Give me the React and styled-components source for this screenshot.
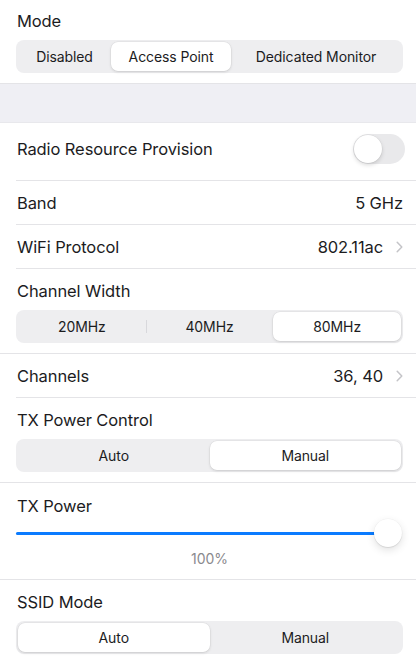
import React from 'react';
import styled, { createGlobalStyle } from 'styled-components';

const GlobalStyle = createGlobalStyle`
  html, body {
    margin: 0;
    padding: 0;
    background: #ffffff;
  }
  body {
    font-family: Inter, "Noto Sans", "Liberation Sans", sans-serif;
    font-weight: 400;
    color: #1c1c1e;
  }
`;

/* Layout blocks */

const Page = styled.div`
  width: 416px;
  background: #ffffff;
`;

const Block = styled.section`
  padding: ${(p) => (p.$first ? '10px' : '11px')} 13px 10px 16px;
  border-bottom: 1px solid #e4e4e7;
`;

const Label = styled.div`
  font-size: 16.5px;
  line-height: 22px;
  letter-spacing: -0.1px;
  margin: 0 0 8px 1px;
`;

const Gap = styled.div`
  height: 38px;
  background: #efeff4;
  border-bottom: 1px solid #e8e8ec;
`;

const Row = styled.div`
  display: flex;
  align-items: center;
  justify-content: space-between;
  box-sizing: border-box;
  height: ${(p) => p.$h || 43}px;
  margin-left: 16px;
  padding: 0 13px ${(p) => p.$lift || 0}px 1px;
  border-bottom: 1px solid #e4e4e7;
  font-size: 16.5px;
  letter-spacing: -0.1px;
  box-sizing: content-box;
`;

const Value = styled.span`
  display: flex;
  align-items: center;
  gap: 13px;
`;

const Chevron = () => (
  <svg width="7" height="12" viewBox="0 0 7 12">
    <path d="M1.2 1.2l4.6 4.8-4.6 4.8" fill="none" stroke="#c4c4c8" strokeWidth="1.5" strokeLinecap="round" strokeLinejoin="round" />
  </svg>
);

/* Segmented control */

const Segmented = styled.div`
  display: flex;
  height: 33px;
  padding: 2px;
  box-sizing: border-box;
  background: #eeeef0;
  border-radius: 8px;
`;

const Segment = styled.div`
  position: relative;
  flex: ${(p) => p.$grow} 1 0;
  display: flex;
  align-items: center;
  justify-content: center;
  font-size: 14px;
  letter-spacing: -0.1px;
  color: #1c1c1e;
  border-radius: 7px;
  background: ${(p) => (p.$active ? '#ffffff' : 'transparent')};
  box-shadow: ${(p) => (p.$active ? '0 1px 3px rgba(0,0,0,0.13), 0 0 0 0.5px rgba(0,0,0,0.05)' : 'none')};

  &::before {
    content: '';
    display: ${(p) => (p.$divider ? 'block' : 'none')};
    position: absolute;
    left: 0;
    top: 8px;
    bottom: 8px;
    width: 1px;
    background: #d8d8dc;
  }
`;

const SegmentedControl = ({ items, active, weights }) => (
  <Segmented>
    {items.map((item, i) => (
      <Segment
        key={item}
        $grow={weights ? weights[i] : 1}
        $active={i === active}
        $divider={i > 0 && i !== active && i - 1 !== active}
      >
        {item}
      </Segment>
    ))}
  </Segmented>
);

/* Toggle */

const Toggle = styled.div`
  width: 52px;
  height: 30px;
  box-sizing: border-box;
  border-radius: 15px;
  background: #e9e9eb;
  padding: 1px;
  margin-right: -2px;
  display: flex;
`;

const Knob = styled.div`
  width: 28px;
  height: 28px;
  border-radius: 50%;
  background: #ffffff;
  box-shadow: 0 2px 4px rgba(0,0,0,0.15), 0 0 0 0.5px rgba(0,0,0,0.06);
`;

/* Slider */

const SliderBlock = styled.section`
  padding: 12px 13px 10px 16px;
  border-bottom: 1px solid #e4e4e7;
`;

const SliderLabel = styled(Label)`
  margin-bottom: 0;
`;

const SliderWrap = styled.div`
  height: 32px;
  display: flex;
  align-items: center;
  margin-right: 1px;
`;

const Track = styled.div`
  position: relative;
  flex: 1;
  height: 3px;
  border-radius: 2px;
  background: #e2e2e6;
`;

const Fill = styled.div`
  height: 100%;
  border-radius: 2px;
  background: #0a7bff;
`;

const Thumb = styled.div`
  position: absolute;
  top: 50%;
  width: 28px;
  height: 28px;
  margin: -14px 0 0 -14px;
  border-radius: 50%;
  background: #ffffff;
  box-shadow: 0 3px 8px rgba(0,0,0,0.12), 0 1px 1px rgba(0,0,0,0.08), 0 0 0 0.5px rgba(0,0,0,0.04);
`;

const Percent = styled.div`
  text-align: center;
  font-size: 14px;
  line-height: 20px;
  color: #8a8a8e;
`;

const Slider = ({ value }) => (
  <SliderWrap>
    <Track>
      <Fill style={{ width: `${value * 0.965}%` }} />
      <Thumb style={{ left: `${value * 0.965}%` }} />
    </Track>
  </SliderWrap>
);

export default function App() {
  return (
    <Page>
      <GlobalStyle />
      <Block $first>
        <Label>Mode</Label>
        <SegmentedControl
          items={['Disabled', 'Access Point', 'Dedicated Monitor']}
          weights={[93, 120, 170]}
          active={1}
        />
      </Block>
      <Gap />
      <Row $h={52} $lift={5}>
        <span>Radio Resource Provision</span>
        <Toggle>
          <Knob />
        </Toggle>
      </Row>
      <Row>
        <span>Band</span>
        <Value>5 GHz</Value>
      </Row>
      <Row>
        <span>WiFi Protocol</span>
        <Value>
          802.11ac
          <Chevron />
        </Value>
      </Row>
      <Block>
        <Label>Channel Width</Label>
        <SegmentedControl items={['20MHz', '40MHz', '80MHz']} active={2} />
      </Block>
      <Row>
        <span>Channels</span>
        <Value>
          36, 40
          <Chevron />
        </Value>
      </Row>
      <Block>
        <Label>TX Power Control</Label>
        <SegmentedControl items={['Auto', 'Manual']} active={1} />
      </Block>
      <SliderBlock>
        <SliderLabel>TX Power</SliderLabel>
        <Slider value={100} />
        <Percent>100%</Percent>
      </SliderBlock>
      <Block>
        <Label>SSID Mode</Label>
        <SegmentedControl items={['Auto', 'Manual']} active={0} />
      </Block>
    </Page>
  );
}
